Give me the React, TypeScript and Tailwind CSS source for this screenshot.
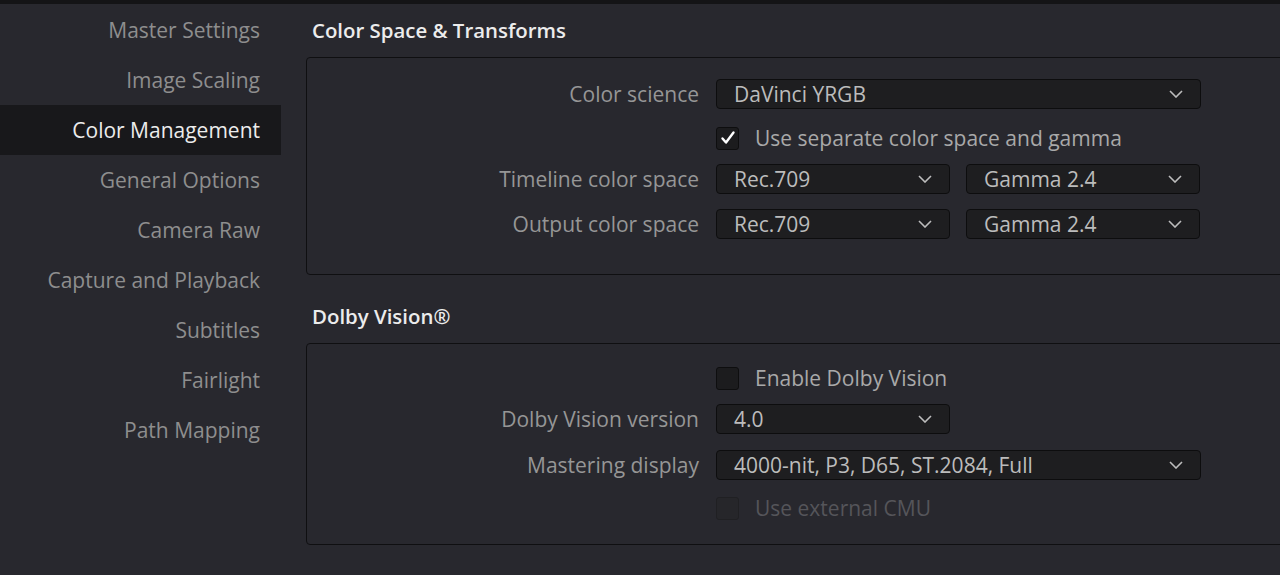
import type { ReactNode } from 'react';

const navItems = [
  'Master Settings',
  'Image Scaling',
  'Color Management',
  'General Options',
  'Camera Raw',
  'Capture and Playback',
  'Subtitles',
  'Fairlight',
  'Path Mapping',
];

function Chevron() {
  return (
    <svg width="14" height="8" viewBox="0 0 14 8" className="shrink-0">
      <path d="M1 1l6 6 6-6" fill="none" stroke="#bdbdbd" strokeWidth="1.6" />
    </svg>
  );
}

function Select({ value, wide }: { value: string; wide?: boolean }) {
  return (
    <div
      className={`${wide ? 'w-[485px]' : 'w-[234px]'} h-[30px] flex items-center justify-between pl-[17px] pr-[17px] rounded-[4px] bg-[#1e1e20] border border-[#0d0d0e] text-[#bcbcbc]`}
    >
      <span className="leading-none">{value}</span>
      <Chevron />
    </div>
  );
}

function Checkbox({ checked, disabled, label }: { checked?: boolean; disabled?: boolean; label: string }) {
  return (
    <div className="flex items-center gap-[16px]">
      <div
        className={`w-[23px] h-[23px] rounded-[3px] flex items-center justify-center border ${
          disabled ? 'bg-[#26262a] border-[#202023]' : 'bg-[#1c1c1e] border-[#0e0e0f]'
        }`}
      >
        {checked && (
          <svg width="16" height="16" viewBox="0 0 16 16">
            <path d="M2.5 8.5l3.5 4 7.5-10" fill="none" stroke="#ffffff" strokeWidth="2.4" strokeLinecap="round" strokeLinejoin="round" />
          </svg>
        )}
      </div>
      <span className={`pt-[2px] ${disabled ? 'text-[#55555a]' : 'text-[#a9a9a9]'}`}>{label}</span>
    </div>
  );
}

function Row({ label, children, className }: { label?: string; children: ReactNode; className?: string }) {
  return (
    <div className={`flex items-center h-[30px] ${className ?? ''}`}>
      <div className="w-[392px] pt-[2px] text-right text-[#969696] shrink-0">{label}</div>
      <div className="ml-[17px] flex items-center gap-[16px]">{children}</div>
    </div>
  );
}

export default function App() {
  return (
    <div
      className="w-[1280px] h-[575px] overflow-hidden bg-[#28282e] border-t-[4px] border-[#141416] text-[21px]"
      style={{ fontFamily: '"Open Sans", "Noto Sans", sans-serif' }}
    >
      <div className="flex">
        <nav className="w-[281px] shrink-0 pt-px">
          {navItems.map((item) => (
            <div
              key={item}
              className={`h-[50px] flex items-center justify-end pt-[2px] pr-[21px] ${
                item === 'Color Management' ? 'bg-[#18181b] text-[#ececec]' : 'text-[#8e8e8e]'
              }`}
            >
              {item}
            </div>
          ))}
        </nav>

        <main className="flex-1 pl-[25px] -mr-[20px]">
          <h2 className="h-[30px] mt-[11px] flex items-center pl-[6px] font-semibold text-[20.4px] text-[#ececec]">
            Color Space &amp; Transforms
          </h2>
          <section className="mt-[12px] border border-[#0f0f11] rounded-[4px] pt-[21px] pb-[35px]">
            <Row label="Color science">
              <Select value="DaVinci YRGB" wide />
            </Row>
            <Row className="mt-[14px]">
              <Checkbox checked label="Use separate color space and gamma" />
            </Row>
            <Row label="Timeline color space" className="mt-[11px]">
              <Select value="Rec.709" />
              <Select value="Gamma 2.4" />
            </Row>
            <Row label="Output color space" className="mt-[15px]">
              <Select value="Rec.709" />
              <Select value="Gamma 2.4" />
            </Row>
          </section>

          <h2 className="h-[30px] mt-[26px] flex items-center pl-[6px] font-semibold text-[20.4px] text-[#ececec]">
            Dolby Vision®
          </h2>
          <section className="mt-[12px] border border-[#0f0f11] rounded-[4px] pt-[19px] pb-[21px]">
            <Row>
              <Checkbox label="Enable Dolby Vision" />
            </Row>
            <Row label="Dolby Vision version" className="mt-[11px]">
              <Select value="4.0" />
            </Row>
            <Row label="Mastering display" className="mt-[16px]">
              <Select value="4000-nit, P3, D65, ST.2084, Full" wide />
            </Row>
            <Row className="mt-[13px]">
              <Checkbox disabled label="Use external CMU" />
            </Row>
          </section>
        </main>
      </div>
    </div>
  );
}
